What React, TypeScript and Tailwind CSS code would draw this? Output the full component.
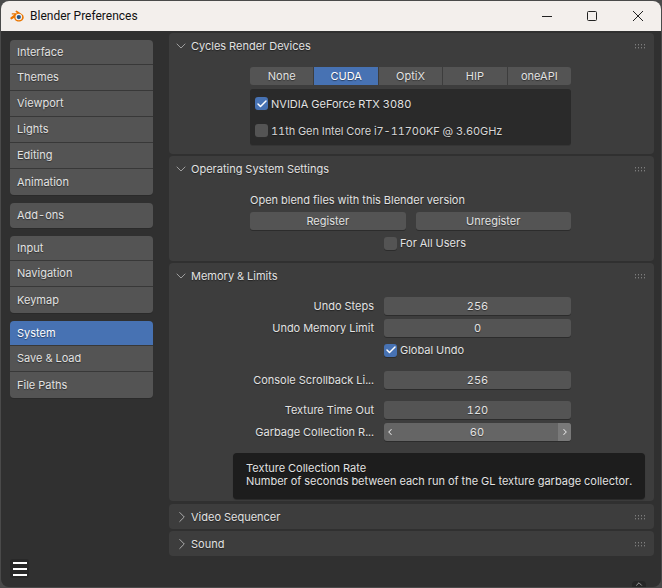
import React from 'react';
import { Check, ChevronDown, ChevronLeft, ChevronRight, ChevronUp } from 'lucide-react';

const sidebarGroups = [
  ['Interface', 'Themes', 'Viewport', 'Lights', 'Editing', 'Animation'],
  ['Add-ons'],
  ['Input', 'Navigation', 'Keymap'],
  ['System', 'Save & Load', 'File Paths'],
];

const backends = ['None', 'CUDA', 'OptiX', 'HIP', 'oneAPI'];

const BlenderLogo = () => (
  <svg width="15" height="12" viewBox="0 0 16 13" className="shrink-0">
    <path d="M0.4 8 L4.6 4.8 L1.8 4.8 L1.8 3.6 L7.6 3.4 L5.6 1.4 L7 0.6 L13 4.6 C15.2 6.2 15.4 9.2 13.4 11 C11.2 13 7.6 13 5.6 11 C4.8 10.2 4.4 9.4 4.4 8.4 L1.6 10.2 C0.4 10.2 0 9 0.4 8 Z" fill="#ea7600" />
    <circle cx="9.4" cy="7.6" r="3.6" fill="#f4f0ee" />
    <circle cx="9.4" cy="7.6" r="2.3" fill="#265787" />
  </svg>
);

const Grip = () => (
  <svg width="11" height="5" viewBox="0 0 11 5" className="shrink-0">
    {[0, 3, 6, 9].map((x) =>
      [0, 3].map((y) => <rect key={`${x}-${y}`} x={x} y={y} width="1" height="1.4" fill="#7d7d7d" />),
    )}
  </svg>
);

const Checkbox = ({ checked, label, className }: { checked?: boolean; label: string; className?: string }) => (
  <div className={`flex items-center gap-[3px] ${className ?? ''}`}>
    <div
      className={`flex h-[13px] w-[13px] items-center justify-center rounded-[3px] shadow-[0_1px_0_#2c2c2c] ${
        checked ? 'bg-[#4772b3]' : 'bg-[#545454]'
      }`}
    >
      {checked && <Check size={12} strokeWidth={3} className="text-white" />}
    </div>
    <span className="pt-[1px]">{label}</span>
  </div>
);

const Button = ({ children, className }: { children: React.ReactNode; className?: string }) => (
  <div
    className={`flex h-[18px] items-center justify-center rounded-[3px] bg-[#545454] pt-[1px] shadow-[0_1px_0_#2c2c2c] ${className ?? ''}`}
  >
    {children}
  </div>
);

const Field = ({ label, children, className }: { label: string; children: React.ReactNode; className?: string }) => (
  <div className={`flex h-[18px] items-center ${className ?? ''}`}>
    <div className="w-[205px] pt-[1px] text-right">{label}</div>
    <div className="ml-[10px] w-[187px]">{children}</div>
  </div>
);

const Panel = ({
  title,
  open = true,
  className,
  children,
}: {
  title: string;
  open?: boolean;
  className?: string;
  children?: React.ReactNode;
}) => (
  <section className={`rounded-[4px] bg-[#3d3d3d] ${className ?? ''}`}>
    <header className="flex h-[26px] items-center pl-[4px] pr-[8px]">
      {open ? (
        <ChevronDown size={16} strokeWidth={1} className="text-[#d0d0d0]" />
      ) : (
        <ChevronRight size={18} strokeWidth={1} className="-mr-[2px] text-[#d0d0d0]" />
      )}
      <span className="ml-[2px] flex-1 pt-[1px]">{title}</span>
      <Grip />
    </header>
    {children}
  </section>
);

export default function App() {
  return (
    <div className="h-[588px] w-[662px] overflow-hidden bg-[#4a4a4a] font-['Inter','Liberation_Sans',sans-serif] text-[11px] tabular-nums text-[#e2e2e2] [text-shadow:0_1px_1px_rgba(0,0,0,0.45)]">
      <div className="m-px flex h-[586px] w-[660px] flex-col overflow-hidden rounded-[8px] bg-[#303030]">
        <div className="flex h-[30px] shrink-0 items-center bg-[#f3efec] pl-[9px] font-['Roboto','Open_Sans',sans-serif] text-[12px] text-[#111] [text-shadow:none]">
          <BlenderLogo />
          <span className="ml-[5px] flex-1">Blender Preferences</span>
          <svg width="125" height="14" viewBox="0 0 125 14" className="mr-[5px] text-[#222]" fill="none" stroke="currentColor">
            <path d="M11 7.5 H21" />
            <rect x="56.5" y="2.5" width="9" height="9" rx="1" />
            <path d="M102 2 L112 12 M112 2 L102 12" />
          </svg>
        </div>

        <div className="flex min-h-0 flex-1">
          <nav className="ml-[9px] mt-[9px] flex w-[143px] shrink-0 flex-col gap-2">
            {sidebarGroups.map((group, i) => (
              <div key={i} className="overflow-hidden rounded-[4px] shadow-[0_1px_0_#2a2a2a]">
                {group.map((item, j) => (
                  <div
                    key={item}
                    className={`flex items-center pl-[7px] ${j === 0 ? 'h-[25px]' : 'h-[26px]'} ${
                      j === 0 && group.length > 1 ? 'pt-[1px]' : ''
                    } ${j < group.length - 1 ? 'border-b border-[#383838]' : ''} ${
                      item === 'System' ? 'bg-[#4772b3] text-white' : 'bg-[#545454]'
                    }`}
                  >
                    {item}
                  </div>
                ))}
              </div>
            ))}
            <div className="mb-[9px] mt-auto flex h-[19px] w-[19px] flex-col items-center justify-center gap-[4px] rounded-[3px] bg-[#282828]">
              <div className="h-[2px] w-[14px] bg-white" />
              <div className="h-[2px] w-[14px] bg-white" />
              <div className="h-[2px] w-[14px] bg-white" />
            </div>
          </nav>

          <main className="relative ml-[16px] flex w-[485px] flex-col pt-[2px]">
            <Panel title="Cycles Render Devices" className="h-[121px]">
              <div className="ml-[81px] mt-[8px] w-[321px]">
                <div className="flex h-[18px] gap-px overflow-hidden rounded-[3px]">
                  {backends.map((b) => (
                    <div
                      key={b}
                      className={`flex flex-1 items-center justify-center pt-[1px] ${
                        b === 'CUDA' ? 'bg-[#4772b3] text-white' : 'bg-[#545454]'
                      }`}
                    >
                      {b}
                    </div>
                  ))}
                </div>
                <div className="mt-[4px] h-[56px] rounded-[3px] bg-[#2a2a2a] pl-[5px] pt-[6px] shadow-[0_1px_0_#353535]">
                  <Checkbox checked label="NVIDIA GeForce RTX 3080" />
                  <Checkbox
                    label="11th Gen Intel Core i7-11700KF @ 3.60GHz"
                    className="mt-[9px] tracking-[-0.07px] text-[#d6d6d6]"
                  />
                </div>
              </div>
            </Panel>

            <Panel title="Operating System Settings" className="mt-[2px] h-[105px]">
              <div className="ml-[81px] mt-[9px] w-[321px]">
                <div className="flex h-[18px] items-center pt-[1px]">Open blend files with this Blender version</div>
                <div className="mt-[3px] flex gap-[10px]">
                  <Button className="flex-1">Register</Button>
                  <Button className="flex-1">Unregister</Button>
                </div>
                <Checkbox label="For All Users" className="ml-[134px] mt-[4px] h-[18px]" />
              </div>
            </Panel>

            <Panel title="Memory & Limits" className="relative mt-[2px] h-[238px]">
              <div className="mt-[8px]">
                <Field label="Undo Steps">
                  <Button>256</Button>
                </Field>
                <Field label="Undo Memory Limit" className="mt-[4px]">
                  <Button>0</Button>
                </Field>
                <Checkbox checked label="Global Undo" className="ml-[215px] mt-[4px] h-[18px]" />
                <Field label="Console Scrollback Li..." className="mt-[12px]">
                  <Button>256</Button>
                </Field>
                <Field label="Texture Time Out" className="mt-[12px]">
                  <Button>120</Button>
                </Field>
                <Field label="Garbage Collection R..." className="mt-[4px]">
                  <div className="flex h-[18px] items-center overflow-hidden rounded-[3px] bg-[#656565] shadow-[0_1px_0_#2c2c2c]">
                    <div className="flex h-full w-[12px] items-center justify-center">
                      <ChevronLeft size={10} strokeWidth={2.5} />
                    </div>
                    <div className="flex-1 pt-[1px] text-center">60</div>
                    <div className="flex h-full w-[13px] items-center justify-center bg-[#797979]">
                      <ChevronRight size={10} strokeWidth={2.5} />
                    </div>
                  </div>
                </Field>
              </div>
              <div className="absolute left-[64px] top-[190px] h-[46px] w-[412px] rounded-[4px] bg-[#1d1d1d] pl-[13px] pt-[9px] leading-[13px] shadow-[0_1px_1px_#2a2a2a]">
                <div>Texture Collection Rate</div>
                <div>Number of seconds between each run of the GL texture garbage collector.</div>
              </div>
            </Panel>

            <Panel title="Video Sequencer" open={false} className="mt-[3px] h-[25px]" />
            <Panel title="Sound" open={false} className="mt-[2px] h-[25px]" />

            <div className="absolute bottom-0 left-[463px] flex h-[6px] w-[14px] items-center justify-center rounded-t-[4px] bg-[#262626]">
              <ChevronUp size={10} strokeWidth={1.5} />
            </div>
          </main>
        </div>
      </div>
    </div>
  );
}
